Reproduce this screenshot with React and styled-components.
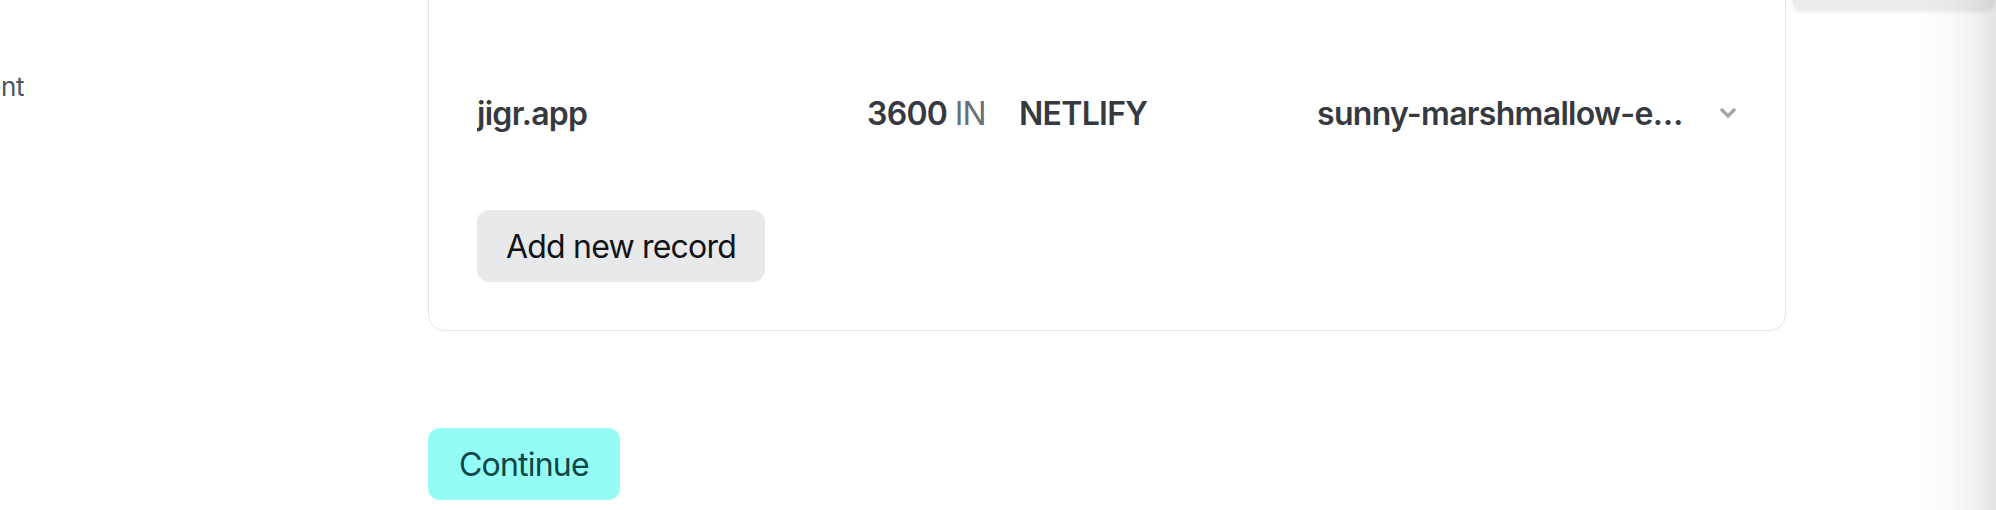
import React from "react";
import styled, { createGlobalStyle } from "styled-components";

const GlobalStyle = createGlobalStyle`
  html, body {
    margin: 0;
    padding: 0;
    height: 510px;
    overflow: hidden;
    background: #ffffff;
    font-family: Inter, "Liberation Sans", Arial, sans-serif;
  }
  * { box-sizing: border-box; }
`;

const Page = styled.div`
  position: relative;
  display: flex;
  align-items: flex-start;
  width: 1996px;
  height: 510px;
  overflow: hidden;
`;

const Sidebar = styled.nav`
  flex: 0 0 428px;
  display: flex;
  flex-direction: column;
  padding-top: 68px;
`;

const NavItem = styled.div`
  width: 24px;
  display: flex;
  justify-content: flex-end;
  overflow: hidden;
  white-space: nowrap;
  font-size: 26px;
  line-height: 38px;
  letter-spacing: -0.4px;
  color: #4b5563;
`;

const Main = styled.main`
  flex: 0 0 1358px;
  display: flex;
  flex-direction: column;
  align-items: flex-start;
`;

const Card = styled.section`
  width: 100%;
  margin-top: -24px;
  padding: 101px 48px 48px;
  border: 1px solid #e6e7e9;
  border-radius: 16px;
  display: flex;
  flex-direction: column;
  align-items: flex-start;
  gap: 60px;
`;

const Row = styled.div`
  width: 100%;
  height: 72px;
  display: grid;
  grid-template-columns: 390px 152px 298px 1fr 22px;
  align-items: center;
  font-size: 32px;
  line-height: 40px;
  letter-spacing: -0.7px;
  color: #363a40;
`;

const Cell = styled.div`
  font-weight: 600;
  white-space: nowrap;
  overflow: hidden;
  text-overflow: ellipsis;
  max-width: ${(p) => p.$max || "none"};
`;

const Unit = styled.span`
  font-weight: 400;
  color: #6b7078;
`;

const ChevronWrap = styled.div`
  display: flex;
  justify-content: flex-end;
  align-items: center;
  height: 40px;
  padding-bottom: 2px;
`;

const Button = styled.button`
  height: 72px;
  padding: 0 ${(p) => (p.$primary ? "31px" : "29px")};
  border: none;
  border-radius: 12px;
  font-family: Inter, "Liberation Sans", Arial, sans-serif;
  font-size: 32px;
  font-weight: 400;
  letter-spacing: -0.8px;
  cursor: pointer;
  background: ${(p) => (p.$primary ? "#95fbf5" : "#e8e9eb")};
  color: ${(p) => (p.$primary ? "#0c4646" : "#121316")};
`;

const Actions = styled.div`
  margin-top: 97px;
  display: flex;
`;

const FloatingTab = styled.div`
  position: absolute;
  top: -20px;
  left: 1793px;
  width: 201px;
  height: 30px;
  background: #eeedeb;
  border-radius: 8px;
  box-shadow: 0 2px 5px rgba(0, 0, 0, 0.08);
`;

const EdgeShade = styled.div`
  position: absolute;
  top: 0;
  right: 0;
  width: 78px;
  height: 100%;
  pointer-events: none;
  background: linear-gradient(
    to right,
    rgba(0, 0, 0, 0) 0%,
    rgba(0, 0, 0, 0.02) 40%,
    rgba(0, 0, 0, 0.06) 75%,
    rgba(0, 0, 0, 0.11) 100%
  );
`;

const Chevron = () => (
  <svg width="18" height="12" viewBox="0 0 18 12" aria-hidden="true">
    <path d="M0.8 3.2 L3.2 0.8 L9 6.6 L14.8 0.8 L17.2 3.2 L9 11.4 Z" fill="#a6a6a6" />
  </svg>
);

export default function App() {
  return (
    <>
      <GlobalStyle />
      <Page>
        <Sidebar>
          <NavItem>Deployment</NavItem>
        </Sidebar>
        <Main>
          <Card>
            <Row>
              <Cell>jigr.app</Cell>
              <Cell>
                3600 <Unit>IN</Unit>
              </Cell>
              <Cell>NETLIFY</Cell>
              <Cell $max="370px">sunny-marshmallow-e4a1b2.netlify.app</Cell>
              <ChevronWrap>
                <Chevron />
              </ChevronWrap>
            </Row>
            <Button>Add new record</Button>
          </Card>
          <Actions>
            <Button $primary>Continue</Button>
          </Actions>
        </Main>
        <FloatingTab />
        <EdgeShade />
      </Page>
    </>
  );
}
